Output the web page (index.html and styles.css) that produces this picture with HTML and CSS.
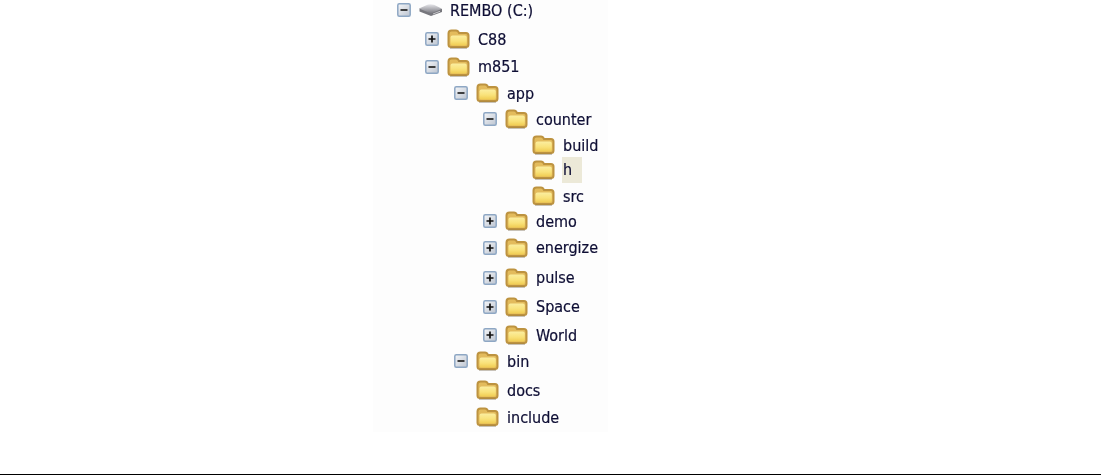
FILE: index.html
```html
<!DOCTYPE html>
<html lang="en">
<head>
<meta charset="utf-8">
<title>Folder tree</title>
<link rel="stylesheet" href="styles.css">
</head>
<body>
<svg class="defs" width="0" height="0" aria-hidden="true">
  <defs>
    <linearGradient id="fg" x1="0" y1="0" x2="0" y2="1">
      <stop offset="0" stop-color="#fbeea0"/>
      <stop offset=".55" stop-color="#f9e27a"/>
      <stop offset="1" stop-color="#f0cc52"/>
    </linearGradient>
    <linearGradient id="bx" x1="0" y1="0" x2="1" y2="1">
      <stop offset="0" stop-color="#f6f7f9"/>
      <stop offset="1" stop-color="#bcc4d0"/>
    </linearGradient>
    <linearGradient id="dg" x1="0" y1="0" x2="0" y2="1">
      <stop offset="0" stop-color="#e6e6ea"/>
      <stop offset="1" stop-color="#77777e"/>
    </linearGradient>
    <symbol id="folder" viewBox="0 0 23 20">
      <path d="M1.500 4.500Q1.500 1.500 4.500 1.500H9Q11 1.500 12 4H19Q21.500 4 21.500 6.500V15.500Q21.500 18 19 18H4Q1.500 18 1.500 15.500Z" fill="#e3bb5c" stroke="#bd9340" stroke-width="2"/>
      <path d="M3.500 8.500Q3.500 6.500 5.500 6.500H17.800Q19.800 6.500 19.800 8.500V14.500Q19.800 16.500 17.800 16.500H5.500Q3.500 16.500 3.500 14.500Z" fill="url(#fg)"/>
      <path d="M3 19.200H20" stroke="#6f6046" stroke-opacity=".55" stroke-width="1"/>
    </symbol>
    <symbol id="minus" viewBox="0 0 14 14">
      <rect x=".8" y=".8" width="12.400" height="12.400" rx="1.500" fill="url(#bx)" stroke="#8ea7c4" stroke-width="1.500"/>
      <path d="M3.500 7H10.500" stroke="#222" stroke-width="1.700"/>
    </symbol>
    <symbol id="plus" viewBox="0 0 14 14">
      <rect x=".8" y=".8" width="12.400" height="12.400" rx="1.500" fill="url(#bx)" stroke="#8ea7c4" stroke-width="1.500"/>
      <path d="M3.500 7H10.500M7 3.500V10.500" stroke="#111" stroke-width="1.700"/>
    </symbol>
    <symbol id="drive" viewBox="0 0 25 14">
      <path d="M1.500 5.500V8.500L13 13L24 9V6Z" fill="#77777d"/>
      <path d="M1 5.500L10 1.500Q13 .8 16 1.800L24 5.800L13 10.500Z" fill="url(#dg)"/>
      <path d="M15 11L22 8.300" stroke="#c8c8cc" stroke-width="1"/>
    </symbol>
  </defs>
</svg>
<main class="page">
  <ul class="tree">
    <li class="row root d0"><svg class="exp"><use href="#minus"/></svg><svg class="drive"><use href="#drive"/></svg><span class="drive-label">REMBO (C:)</span></li>
    <li class="row d1"><svg class="exp"><use href="#plus"/></svg><svg class="fld"><use href="#folder"/></svg><span>C88</span></li>
    <li class="row d1"><svg class="exp"><use href="#minus"/></svg><svg class="fld"><use href="#folder"/></svg><span>m851</span></li>
    <li class="row d2"><svg class="exp"><use href="#minus"/></svg><svg class="fld"><use href="#folder"/></svg><span>app</span></li>
    <li class="row d3"><svg class="exp"><use href="#minus"/></svg><svg class="fld"><use href="#folder"/></svg><span>counter</span></li>
    <li class="row d4"><span class="exp"></span><svg class="fld"><use href="#folder"/></svg><span>build</span></li>
    <li class="row d4"><span class="exp"></span><svg class="fld"><use href="#folder"/></svg><span class="selected">h</span></li>
    <li class="row d4"><span class="exp"></span><svg class="fld"><use href="#folder"/></svg><span>src</span></li>
    <li class="row d3"><svg class="exp"><use href="#plus"/></svg><svg class="fld"><use href="#folder"/></svg><span>demo</span></li>
    <li class="row d3"><svg class="exp"><use href="#plus"/></svg><svg class="fld"><use href="#folder"/></svg><span>energize</span></li>
    <li class="row d3"><svg class="exp"><use href="#plus"/></svg><svg class="fld"><use href="#folder"/></svg><span>pulse</span></li>
    <li class="row d3"><svg class="exp"><use href="#plus"/></svg><svg class="fld"><use href="#folder"/></svg><span>Space</span></li>
    <li class="row d3"><svg class="exp"><use href="#plus"/></svg><svg class="fld"><use href="#folder"/></svg><span>World</span></li>
    <li class="row d2"><svg class="exp"><use href="#minus"/></svg><svg class="fld"><use href="#folder"/></svg><span>bin</span></li>
    <li class="row d2"><span class="exp"></span><svg class="fld"><use href="#folder"/></svg><span>docs</span></li>
    <li class="row d2"><span class="exp"></span><svg class="fld"><use href="#folder"/></svg><span>include</span></li>
  </ul>
</main>
</body>
</html>
```
FILE: styles.css
```css
* { box-sizing: border-box; }
html, body { margin: 0; padding: 0; background: #fff; }
.defs { position: absolute; }
.page {
  height: 475px;
  border-bottom: 1px solid #000;
  overflow: hidden;
}
.tree {
  list-style: none;
  margin: 0 0 0 373px;
  padding: 0;
  width: 235px;
  height: 432px;
  background: #fdfdfd;
  display: grid;
  grid-template-rows: 26px 26px 29px 24px 28px 24px 26px 26px 24px 29px 31px 27px 30px 22px 36px 18px;
  align-content: start;
  font-family: "DejaVu Sans Condensed", "DejaVu Sans", sans-serif;
  font-stretch: condensed;
  font-size: 16px;
  color: #0e0e34;
  -webkit-text-stroke: .2px #0e0e34;
  filter: blur(.4px);
}
.row { display: flex; align-items: center; white-space: nowrap; }
.root { height: 20px; }
.d0 { padding-left: 24px; }
.d1 { padding-left: 52px; }
.d2 { padding-left: 81px; }
.d3 { padding-left: 110px; }
.d4 { padding-left: 137px; }
.exp { flex: none; width: 14px; height: 14px; margin-right: 8px; }
.fld { flex: none; width: 23px; height: 20px; margin-right: 8px; }
.d0 .exp { margin-right: 7px; }
.drive { flex: none; width: 25px; height: 14px; margin-right: 7px; }
.selected {
  background: #ece9d8;
  height: 26px;
  line-height: 26px;
  width: 20px;
  margin-left: -1px;
  padding-left: 1px;
}
```
